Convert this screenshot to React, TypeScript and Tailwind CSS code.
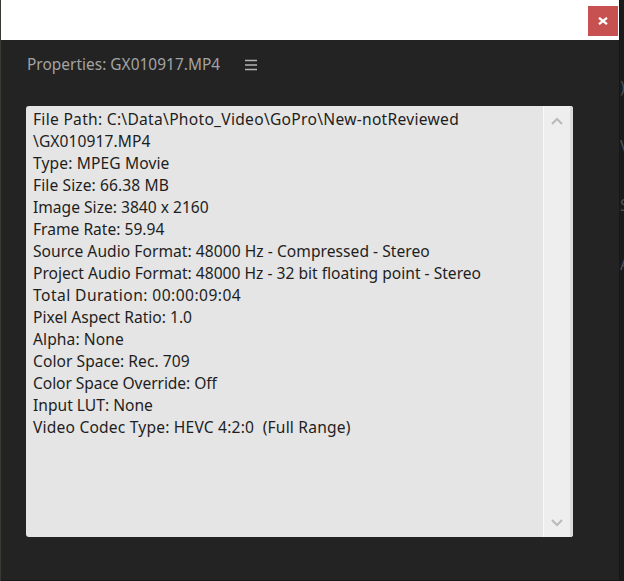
const lines = [
  { text: 'File Path: C:\\Data\\Photo_Video\\GoPro\\New-notReviewed', tracking: 'tracking-[0.28px]' },
  { text: '\\GX010917.MP4', tracking: 'tracking-[0.08px]' },
  { text: 'Type: MPEG Movie', tracking: 'tracking-[0.12px]' },
  { text: 'File Size: 66.38 MB', tracking: 'tracking-[0.1px]' },
  { text: 'Image Size: 3840 x 2160', tracking: '' },
  { text: 'Frame Rate: 59.94', tracking: '' },
  { text: 'Source Audio Format: 48000 Hz - Compressed - Stereo', tracking: 'tracking-[0.04px]' },
  { text: 'Project Audio Format: 48000 Hz - 32 bit floating point - Stereo', tracking: '' },
  { text: 'Total Duration: 00:00:09:04', tracking: 'tracking-[0.44px]' },
  { text: 'Pixel Aspect Ratio: 1.0', tracking: '' },
  { text: 'Alpha: None', tracking: 'tracking-[0.09px]' },
  { text: 'Color Space: Rec. 709', tracking: 'tracking-[0.05px]' },
  { text: 'Color Space Override: Off', tracking: 'tracking-[-0.08px]' },
  { text: 'Input LUT: None', tracking: '' },
  { text: 'Video Codec Type: HEVC 4:2:0  (Full Range)', tracking: 'tracking-[0.19px]' },
];

export default function App() {
  return (
    <div className="flex h-[581px] w-[624px] overflow-hidden bg-[#1b1b1b] font-['Noto_Sans',sans-serif]">
      <div className="w-px shrink-0 bg-[#3a3a34]" />
      <div className="flex w-[618px] shrink-0 flex-col">
        {/* title bar */}
        <div className="flex h-10 shrink-0 items-start justify-end bg-white pt-1.5 pr-px">
          <button className="flex h-[30px] w-[30px] items-center justify-center bg-[#c75050] text-white">
            <svg width="10" height="8" viewBox="0 0 10 8">
              <path d="M1 0.8 L9 7.2 M9 0.8 L1 7.2" stroke="currentColor" strokeWidth="2.2" fill="none" />
            </svg>
          </button>
        </div>

        <div className="flex flex-1 flex-col border-b border-[#1a1a1a] bg-[#232323] pt-[14px] pl-[25px]">
          <div className="flex h-[22px] items-center gap-[25px] pl-px text-[15.4px] tracking-[0.04px] text-[#a3a3a3]">
            <span>Properties: GX010917.MP4</span>
            <svg width="12" height="12" viewBox="0 0 12 12" className="text-[#b4b4b4]">
              <path d="M0 1.5 H12 M0 6 H12 M0 10.5 H12" stroke="currentColor" strokeWidth="1.5" fill="none" />
            </svg>
          </div>

          {/* text box */}
          <div className="mt-[30px] flex h-[431px] w-[547px] overflow-hidden rounded-[3px] bg-[#e5e5e5]">
            <div className="flex-1 pt-0.5 pl-[7px] text-[15.6px] leading-[22px] whitespace-pre text-[#1e1e1e]">
              {lines.map((line) => (
                <div key={line.text} className={line.tracking}>{line.text}</div>
              ))}
            </div>
            <div className="flex w-[30px] shrink-0 flex-col items-center justify-between border-l border-r-[3px] border-l-[#f8f8f8] border-r-[#dadada] bg-[#eeeeee] pt-[11px] pr-px pb-[10px]">
              <svg width="12" height="8" viewBox="0 0 12 8" className="text-[#b9b9b9]">
                <path d="M1 7 L6 2 L11 7" stroke="currentColor" strokeWidth="2" fill="none" />
              </svg>
              <svg width="12" height="8" viewBox="0 0 12 8" className="text-[#b9b9b9]">
                <path d="M1 1 L6 6 L11 1" stroke="currentColor" strokeWidth="2" fill="none" />
              </svg>
            </div>
          </div>
        </div>
      </div>

      {/* window behind, letters cut off by the dialog */}
      <div className="flex flex-1 flex-col gap-[37px] overflow-hidden border-l border-[#161616] pt-[76px] text-[16px] leading-[22px] text-[#4c5258]">
        <span>)</span>
        <span>V</span>
        <span>S</span>
        <span>A</span>
      </div>
    </div>
  );
}
